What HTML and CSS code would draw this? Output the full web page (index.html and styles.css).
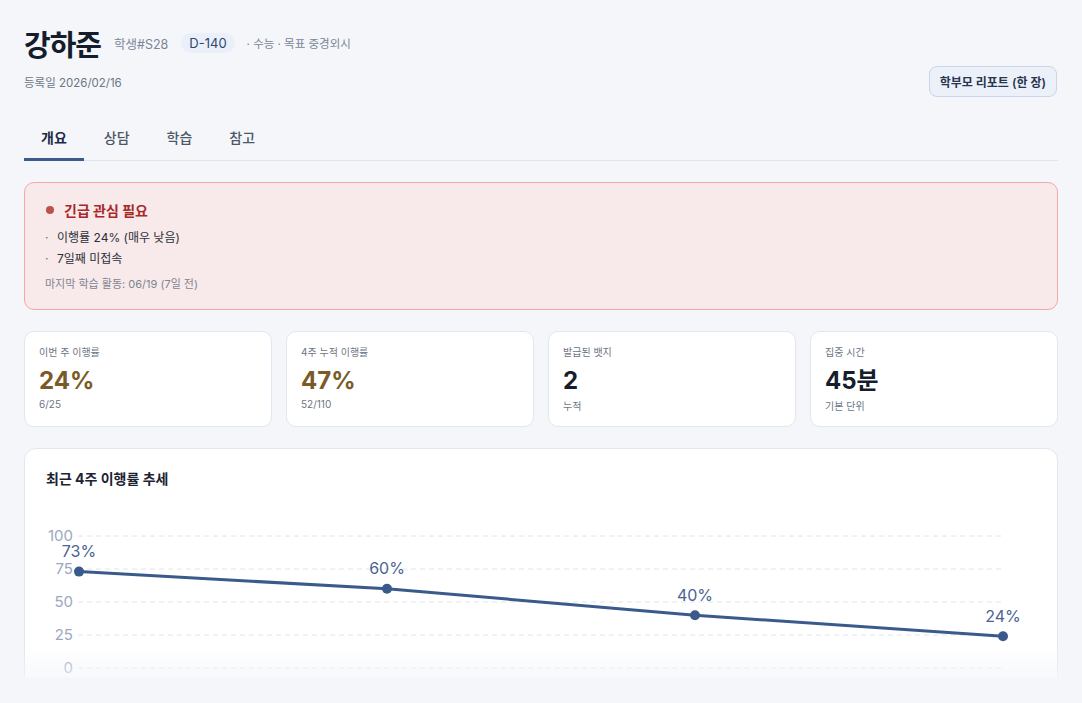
FILE: index.html
```html
<!DOCTYPE html>
<html lang="ko">
<head>
  <meta charset="UTF-8" />
  <meta name="viewport" content="width=device-width, initial-scale=1" />
  <title>강하준 - 학생 상세</title>
  <link rel="stylesheet" href="styles.css">
</head>
<body>
  <div class="page">
    <header class="head">
      <div class="title-row">
        <h1>강하준</h1>
        <span class="sid">학생#S28</span>
        <span class="dday">D-140</span>
        <span class="meta">· 수능 · 목표 중경외시</span>
      </div>
      <div class="sub-row">
        <span class="reg">등록일 2026/02/16</span>
        <button class="report-btn">학부모 리포트 (한 장)</button>
      </div>
    </header>

    <nav class="tabs">
      <a class="tab active">개요</a>
      <a class="tab">상담</a>
      <a class="tab">학습</a>
      <a class="tab">참고</a>
    </nav>

    <section class="alert">
      <div class="alert-title"><span class="dot"></span>긴급 관심 필요</div>
      <ul class="alert-list">
        <li>이행률 24% (매우 낮음)</li>
        <li>7일째 미접속</li>
      </ul>
      <div class="alert-foot">마지막 학습 활동: 06/19 (7일 전)</div>
    </section>

    <section class="stats">
      <div class="stat">
        <div class="stat-label">이번 주 이행률</div>
        <div class="stat-value warn">24%</div>
        <div class="stat-sub">6/25</div>
      </div>
      <div class="stat">
        <div class="stat-label">4주 누적 이행률</div>
        <div class="stat-value warn">47%</div>
        <div class="stat-sub">52/110</div>
      </div>
      <div class="stat">
        <div class="stat-label">발급된 뱃지</div>
        <div class="stat-value">2</div>
        <div class="stat-sub">누적</div>
      </div>
      <div class="stat">
        <div class="stat-label">집중 시간</div>
        <div class="stat-value">45분</div>
        <div class="stat-sub">기본 단위</div>
      </div>
    </section>

    <section class="chart-card">
      <h2>최근 4주 이행률 추세</h2>
      <svg class="chart" width="990" height="200" viewBox="0 0 990 200">
        <g class="grid" stroke="#e1e4ea" stroke-width="1" stroke-dasharray="5 4">
          <line x1="32" y1="25" x2="957" y2="25" />
          <line x1="32" y1="58" x2="957" y2="58" />
          <line x1="32" y1="91" x2="957" y2="91" />
          <line x1="32" y1="124" x2="957" y2="124" />
          <line x1="32" y1="157" x2="957" y2="157" />
        </g>
        <g class="axis" fill="#9ba8c0" font-size="15" text-anchor="end">
          <text x="27" y="30">100</text>
          <text x="27" y="63">75</text>
          <text x="27" y="96">50</text>
          <text x="27" y="129">25</text>
          <text x="27" y="162">0</text>
        </g>
        <polyline points="33,60.6 341,77.8 649,104.2 957,125.3" fill="none" stroke="#3b5a8c" stroke-width="3" stroke-linejoin="round" />
        <g fill="#3b5a8c">
          <circle cx="33" cy="60.6" r="5" />
          <circle cx="341" cy="77.8" r="5" />
          <circle cx="649" cy="104.2" r="5" />
          <circle cx="957" cy="125.3" r="5" />
        </g>
        <g class="pt-labels" fill="#4a6392" font-size="16" text-anchor="middle">
          <text x="33" y="46">73%</text>
          <text x="341" y="63">60%</text>
          <text x="649" y="90">40%</text>
          <text x="957" y="111">24%</text>
        </g>
      </svg>
    </section>
  </div>
</body>
</html>
```

FILE: styles.css
```css
* {
  box-sizing: border-box;
}

body {
  margin: 0;
  background: #f4f6f9;
  font-family: Inter, "Noto Sans CJK KR", sans-serif;
  color: #1b2233;
}

.page {
  position: relative;
  height: 678px;
  overflow: hidden;
  padding: 22px 24px 0;
}

.page::after {
  content: "";
  position: absolute;
  left: 0;
  right: 0;
  bottom: 0;
  height: 30px;
  background: linear-gradient(rgba(244, 246, 249, 0), rgba(244, 246, 249, 0.7));
}

.title-row {
  display: flex;
  align-items: center;
}

h1 {
  margin: 0 13px 0 0;
  font-size: 29px;
  font-weight: 700;
  letter-spacing: -1px;
  color: #151c2b;
}

.sid {
  font-size: 12.5px;
  color: #7b8598;
  margin-right: 13px;
}

.dday {
  background: #eaf0f9;
  color: #2f466d;
  font-size: 13px;
  padding: 2px 8px;
  border-radius: 10px;
  margin-right: 12px;
}

.meta {
  font-size: 11.5px;
  color: #7b8598;
}

.sub-row {
  display: flex;
  justify-content: space-between;
  align-items: center;
  margin-top: 2px;
}

.reg {
  font-size: 11.5px;
  color: #6c7686;
}

.report-btn {
  font-family: inherit;
  font-size: 12px;
  font-weight: 600;
  color: #273550;
  background: #ecf1f9;
  border: 1px solid #c8d5ea;
  border-radius: 8px;
  padding: 0 10px;
  height: 31px;
  margin-right: 1px;
}

.tabs {
  display: flex;
  gap: 3px;
  margin-top: 28px;
  border-bottom: 1px solid #e0e5ec;
}

.tab {
  padding: 2px 17px 11px;
  font-size: 14px;
  font-weight: 500;
  color: #4e5768;
  border-bottom: 3px solid transparent;
  margin-bottom: -1px;
}

.tab.active {
  color: #1d2b48;
  font-weight: 700;
  border-bottom-color: #3a5a8c;
}

.alert {
  margin-top: 21px;
  background: #f8eaea;
  border: 1px solid #f2a9a7;
  border-radius: 10px;
  padding: 17px 20px 18px;
}

.alert-title {
  display: flex;
  align-items: center;
  font-size: 14px;
  font-weight: 700;
  color: #a8282a;
}

.dot {
  width: 8px;
  height: 8px;
  border-radius: 50%;
  background: #c0504d;
  margin-right: 10px;
  margin-left: 1px;
}

.alert-list {
  list-style: none;
  margin: 7px 0 0;
  padding: 0;
}

.alert-list li {
  font-size: 12px;
  color: #2b303a;
  line-height: 21px;
  padding-left: 12px;
  position: relative;
}

.alert-list li::before {
  content: "·";
  position: absolute;
  left: 0;
  color: #6a707a;
}

.alert-foot {
  margin-top: 6px;
  font-size: 11px;
  color: #7d8491;
}

.stats {
  display: grid;
  grid-template-columns: repeat(4, 1fr);
  gap: 14px;
  margin-top: 21px;
}

.stat {
  background: #fff;
  border: 1px solid #e2e7ef;
  border-radius: 10px;
  padding: 12px 14px 14px;
  height: 96px;
}

.stat-label {
  font-size: 10px;
  color: #6d7585;
}

.stat-value {
  font-size: 24px;
  font-weight: 700;
  color: #161d2c;
  margin-top: 7px;
  line-height: 30px;
}

.stat-value.warn {
  color: #7a5a27;
}

.stat-sub {
  font-size: 10px;
  color: #6d7585;
  margin-top: 2px;
}

.chart-card {
  margin-top: 21px;
  background: #fff;
  border: 1px solid #e2e7ef;
  border-radius: 12px;
  padding: 19px 21px 20px;
  height: 300px;
}

.chart-card h2 {
  margin: 0;
  font-size: 14px;
  font-weight: 700;
  color: #1c2332;
}

.chart {
  display: block;
  margin-top: 23px;
  font-family: Inter, "Noto Sans CJK KR", sans-serif;
}
```
